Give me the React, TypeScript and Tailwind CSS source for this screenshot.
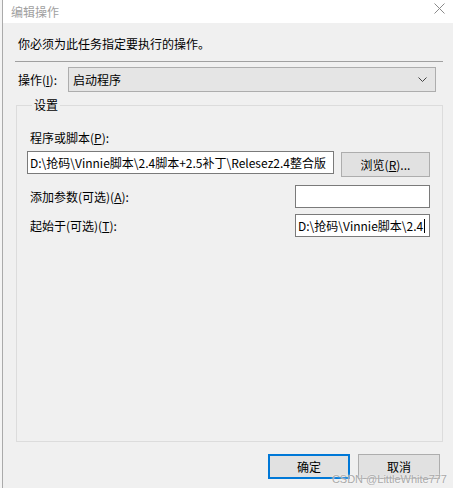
import React from 'react';

const font = "font-['Noto_Sans_CJK_SC','Noto_Sans',sans-serif]";

const Field: React.FC<{ value?: string; caret?: boolean; className?: string }> = ({ value = '', caret, className = '' }) => (
  <div className={`h-[23px] border border-[#7a7a7a] bg-white flex items-center px-[2px] overflow-hidden whitespace-nowrap text-[12px] text-black ${className}`}>
    {value}
    {caret && <span className="ml-[1px] w-px h-[14px] bg-black" />}
  </div>
);

const Btn: React.FC<{ label: React.ReactNode; primary?: boolean; className?: string }> = ({ label, primary, className = '' }) => (
  <div
    className={`h-[25px] w-[82px] flex items-center justify-center bg-[#e1e1e1] text-[12px] text-black ${
      primary ? 'border-2 border-[#0078d7]' : 'border border-[#adadad]'
    } ${className}`}
  >
    {label}
  </div>
);

export default function App() {
  return (
    <div className={`w-[453px] h-[488px] flex bg-white overflow-hidden relative ${font}`}>
      <div className="w-[2px] h-full bg-[#f4f4f4]" />
      <div className="flex-1 flex flex-col border-l border-[#aaaaaa]">
        {/* title bar */}
        <div className="h-[23px] bg-white flex items-center justify-between pl-[8px] pr-[8px] shrink-0">
          <span className="text-[12px] text-[#a0a0a0] leading-none">编辑操作</span>
          <svg width="11" height="11" viewBox="0 0 11 11" className="mb-[6px]">
            <path d="M0.5 0.5 L10.5 10.5 M10.5 0.5 L0.5 10.5" stroke="#8a8a8a" strokeWidth="1" />
          </svg>
        </div>

        {/* body */}
        <div className="flex-1 bg-[#f0f0f0] pl-[12px] pr-[10px] pt-[13px] flex flex-col text-[12px] text-black">
          <div className="h-[16px] leading-[16px] pl-[3px]">你必须为此任务指定要执行的操作。</div>
          <div className="mt-[9px] h-px bg-[#a0a0a0]" />

          <div className="mt-[5px] flex items-center">
            <span className="w-[53px] pl-[3px] leading-[16px]">
              操作(<span className="underline">I</span>):
            </span>
            <div className="flex-1 mr-[7px] h-[25px] border border-[#adadad] bg-[#e5e5e5] flex items-center justify-between pl-[4px] pr-[8px]">
              <span>启动程序</span>
              <svg width="9" height="5" viewBox="0 0 9 5">
                <path d="M0.5 0.5 L4.5 4.5 L8.5 0.5" fill="none" stroke="#444" strokeWidth="1" />
              </svg>
            </div>
          </div>

          <fieldset className="mt-[5px] ml-[1px] h-[345px] border border-[#dcdcdc] pl-[10px] pr-[12px]">
            <legend className="ml-[5px] px-[2px] leading-[16px]">设置</legend>
            <div className="mt-[17px] pl-[3px] leading-[16px]">
              程序或脚本(<span className="underline">P</span>):
            </div>
            <div className="mt-[5px] flex items-start">
              <Field value="D:\抢码\Vinnie脚本\2.4脚本+2.5补丁\Relesez2.4整合版" className="w-[307px]" />
              <Btn
                label={
                  <>
                    浏览(<span className="underline">R</span>)...
                  </>
                }
                className="ml-auto w-[89px] h-[25px] mt-px"
              />
            </div>
            <div className="mt-[8px] flex items-center">
              <span className="pl-[3px]">
                添加参数(可选)(<span className="underline">A</span>):
              </span>
              <Field className="ml-auto w-[135px]" />
            </div>
            <div className="mt-[6px] flex items-center">
              <span className="pl-[3px]">
                起始于(可选)(<span className="underline">T</span>):
              </span>
              <Field value="D:\抢码\Vinnie脚本\2.4" caret className="ml-auto w-[135px]" />
            </div>
          </fieldset>

          <div className="mt-[12px] flex justify-end gap-[8px] pr-[3px]">
            <Btn label="确定" primary />
            <Btn label="取消" />
          </div>
        </div>
      </div>
      <span className="absolute right-[6px] bottom-[3px] text-[11px] leading-none text-[#a9a9a9] font-['Liberation_Sans',sans-serif] [text-shadow:0_0_2px_#fff]">
        CSDN @LittleWhite777
      </span>
    </div>
  );
}
